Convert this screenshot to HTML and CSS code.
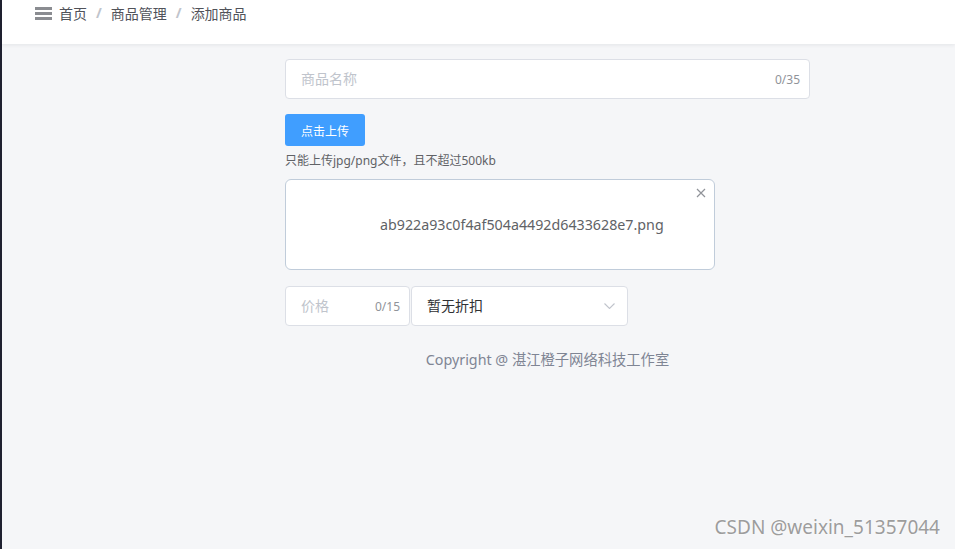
FILE: index.html
```html
<!DOCTYPE html>
<html lang="zh-CN">
<head>
<meta charset="utf-8">
<title>添加商品</title>
<link rel="stylesheet" href="styles.css">
</head>
<body>
<div class="edge"></div>
<div class="main">
  <header class="header">
    <svg class="fold" width="17" height="13" viewBox="0 0 17 13"><rect x="0" y="0" width="17" height="3" fill="#8a8c91"/><rect x="0" y="5" width="17" height="3" fill="#8a8c91"/><rect x="0" y="10" width="17" height="3" fill="#8a8c91"/></svg>
    <nav class="crumbs">
      <span class="crumb">首页</span><span class="sep">/</span>
      <span class="crumb">商品管理</span><span class="sep">/</span>
      <span class="crumb">添加商品</span>
    </nav>
  </header>
  <section class="content">
    <div class="input name-input">
      <input class="inner" type="text" placeholder="商品名称">
      <span class="count">0/35</span>
    </div>
    <button class="btn-upload" type="button">点击上传</button>
    <div class="tip">只能上传jpg/png文件，且不超过500kb</div>
    <div class="upload-item">
      <span class="file-name">ab922a93c0f4af504a4492d6433628e7.png</span>
      <svg class="close" width="10" height="10" viewBox="0 0 10 10"><path d="M1 1 L9 9 M9 1 L1 9" stroke="#909399" stroke-width="1.2" fill="none"/></svg>
    </div>
    <div class="row">
      <div class="input price-input">
        <input class="inner" type="text" placeholder="价格">
        <span class="count">0/15</span>
      </div>
      <div class="select">
        <span class="select-value">暂无折扣</span>
        <svg class="arrow" width="11" height="6" viewBox="0 0 11 6"><path d="M0.5 0.5 L5.5 5.5 L10.5 0.5" stroke="#c0c4cc" stroke-width="1.1" fill="none"/></svg>
      </div>
    </div>
    <div class="copyright">Copyright @ 湛江橙子网络科技工作室</div>
  </section>
</div>
<div class="watermark">CSDN @weixin_51357044</div>
</body>
</html>
```
FILE: styles.css
```css
* { box-sizing: border-box; }
html, body { margin: 0; padding: 0; }
body {
  display: flex;
  height: 549px;
  overflow: hidden;
  font-family: "Noto Sans", "Noto Sans CJK SC", sans-serif;
  background: #f5f6f8;
}
.edge { width: 2px; background: #1f2130; flex: none; }
.main { flex: 1; display: flex; flex-direction: column; }
.header {
  height: 44px;
  background: #fff;
  box-shadow: 0 1px 4px rgba(0, 21, 41, 0.08);
  display: flex;
  align-items: flex-start;
  padding: 3px 0 0 33px;
  position: relative;
  z-index: 1;
}
.fold { margin-top: 4px; margin-right: 7px; flex: none; }
.crumbs { display: flex; font-size: 14px; line-height: 20px; color: #505259; }
.crumbs .crumb { font-family: "Noto Sans CJK SC", sans-serif; }
.sep { color: #c0c4cc; margin: 0 9px; font-weight: 700; }
.content {
  padding: 15px 0 0 283px;
  width: 808px;
  display: flex;
  flex-direction: column;
  align-items: flex-start;
}
.input {
  display: flex;
  align-items: center;
  height: 40px;
  background: #fff;
  border: 1px solid #dcdfe6;
  border-radius: 4px;
  padding: 0 9px 0 15px;
}
.inner {
  flex: 1;
  min-width: 0;
  border: 0;
  outline: 0;
  padding: 0;
  margin-top: -2px;
  background: transparent;
  font-family: "Noto Sans CJK SC", sans-serif;
  font-size: 14px;
  color: #606266;
}
.inner::placeholder { color: #c0c4cc; }
.count { font-size: 12px; color: #909399; }
.name-input { width: 525px; }
.btn-upload {
  margin-top: 15px;
  width: 80px;
  height: 32px;
  border: 0;
  border-radius: 3px;
  background: #409eff;
  color: #fff;
  font-family: "Noto Sans CJK SC", sans-serif;
  font-size: 12px;
  padding: 0;
}
.tip {
  margin-top: 7px;
  font-size: 12px;
  line-height: 16px;
  color: #606266;
}
.upload-item {
  margin-top: 10px;
  width: 430px;
  height: 91px;
  background: #fff;
  border: 1px solid #c0ccda;
  border-radius: 6px;
  padding: 10px 40px 10px 94px;
  position: relative;
}
.file-name { display: block; line-height: 70px; font-size: 14.25px; color: #606266; }
.close { position: absolute; top: 8px; right: 8px; }
.row { display: flex; gap: 1px; margin-top: 16px; }
.price-input { width: 125px; padding-right: 9px; }
.select {
  width: 217px;
  height: 40px;
  background: #fff;
  border: 1px solid #dcdfe6;
  border-radius: 4px;
  display: flex;
  align-items: center;
  justify-content: space-between;
  padding: 0 12px 0 15px;
}
.select-value { font-family: "Noto Sans CJK SC", sans-serif; font-size: 14px; color: #303133; margin-top: -2px; }
.copyright {
  align-self: stretch;
  width: 525px;
  margin-top: 24px;
  text-align: center;
  font-size: 14.3px;
  line-height: 20px;
  color: #7f8594;
}
.watermark {
  position: absolute;
  right: 15px;
  bottom: 9px;
  font-family: "Noto Sans", sans-serif;
  font-size: 19px;
  color: #9d9d9d;
  text-shadow: 0 0 2px #fff;
}
```
